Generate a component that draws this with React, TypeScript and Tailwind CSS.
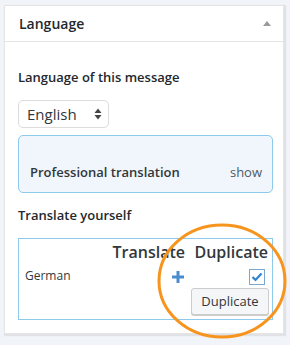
import { useState } from 'react';

export default function App() {
  const [duplicate, setDuplicate] = useState(true);

  return (
    <div className="relative w-[290px] h-[345px] bg-[#f1f4f8] pt-[5px] pl-[4px] font-['Open_Sans',sans-serif] text-[#32373c]">
      <div className="w-[280px] h-[329px] bg-white border border-[#e5e5e5] shadow-[1px_1px_1px_1px_rgba(0,0,0,0.07)]">
        {/* header */}
        <div className="flex items-center justify-between h-[36px] pl-[14px] pr-[12px] border-b border-[#e5e5e5]">
          <h2 className="text-[14px] font-semibold text-[#23282d]">Language</h2>
          <span className="w-0 h-0 border-l-[4px] border-r-[4px] border-b-[5px] border-l-transparent border-r-transparent border-b-[#9a9a9a]" />
        </div>

        <div className="px-[13px] pt-[26px]">
          <p className="text-[13px] font-semibold text-[#23282d] leading-[18px]">Language of this message</p>

          <div className="mt-[14px] flex items-center justify-between w-[91px] h-[28px] pl-[8px] pr-[6px] border border-[#dcdcdc] rounded-[5px] bg-white">
            <span className="text-[15px] text-[#32373c]">English</span>
            <svg width="8" height="12" viewBox="0 0 8 12">
              <path d="M4 0.5 L7.5 5 H0.5 Z" fill="#444" />
              <path d="M4 11.5 L7.5 7 H0.5 Z" fill="#444" />
            </svg>
          </div>

          <div className="mt-[7px] w-[255px] h-[58px] flex items-end justify-between pl-[11px] pr-[10px] pb-[10px] bg-[#f0f6fb] border border-[#8dcaeb] rounded-[5px]">
            <span className="text-[13px] font-semibold text-[#32373c]">Professional translation</span>
            <span className="text-[13px] text-[#4f5a66]">show</span>
          </div>

          <p className="mt-[13px] text-[13px] font-semibold text-[#23282d] leading-[18px]">Translate yourself</p>

          <div className="mt-[14px] w-[255px] h-[82px] border border-[#8dcaeb]">
            <div className="flex h-[23px] items-end text-[16px] font-semibold leading-[20px] text-[#32373c]">
              <span className="flex-1 text-right">Translate</span>
              <span className="w-[87px] text-right pr-[4px]">Duplicate</span>
            </div>
            <div className="flex">
              <span className="flex-1 pl-[6px] pt-[5px] text-[12px] leading-[17px] text-[#32373c]">German</span>
              <svg className="mt-[9px]" width="12" height="12" viewBox="0 0 12 12">
                <path d="M4.5 0 H7.5 V4.5 H12 V7.5 H7.5 V12 H4.5 V7.5 H0 V4.5 H4.5 Z" fill="#4a8ccc" />
              </svg>
              <div className="ml-[7px] w-[81px] pr-[3px] pt-[7px] flex flex-col items-end gap-[3px]">
                <button
                  onClick={() => setDuplicate(!duplicate)}
                  className="w-[16px] h-[16px] mr-[4px] border border-[#7aa7d0] bg-white flex items-center justify-center"
                >
                  {duplicate && (
                    <svg width="12" height="10" viewBox="0 0 12 10">
                      <path d="M1.5 5 L4.5 8 L10.5 1.5" stroke="#2f84d0" strokeWidth="2.2" fill="none" />
                    </svg>
                  )}
                </button>
                <button className="w-[78px] h-[27px] text-[13px] text-[#32373c] bg-[#f5f6f7] border border-[#cccccc] rounded-[3px] shadow-[0_1px_0_#ccc]">
                  Duplicate
                </button>
              </div>
            </div>
          </div>
        </div>
      </div>

      {/* annotation ring */}
      <svg className="absolute left-0 top-0 pointer-events-none" width="290" height="345">
        <ellipse cx="222" cy="281" rx="63" ry="56" fill="none" stroke="#f7941d" strokeWidth="3" />
      </svg>
    </div>
  );
}
